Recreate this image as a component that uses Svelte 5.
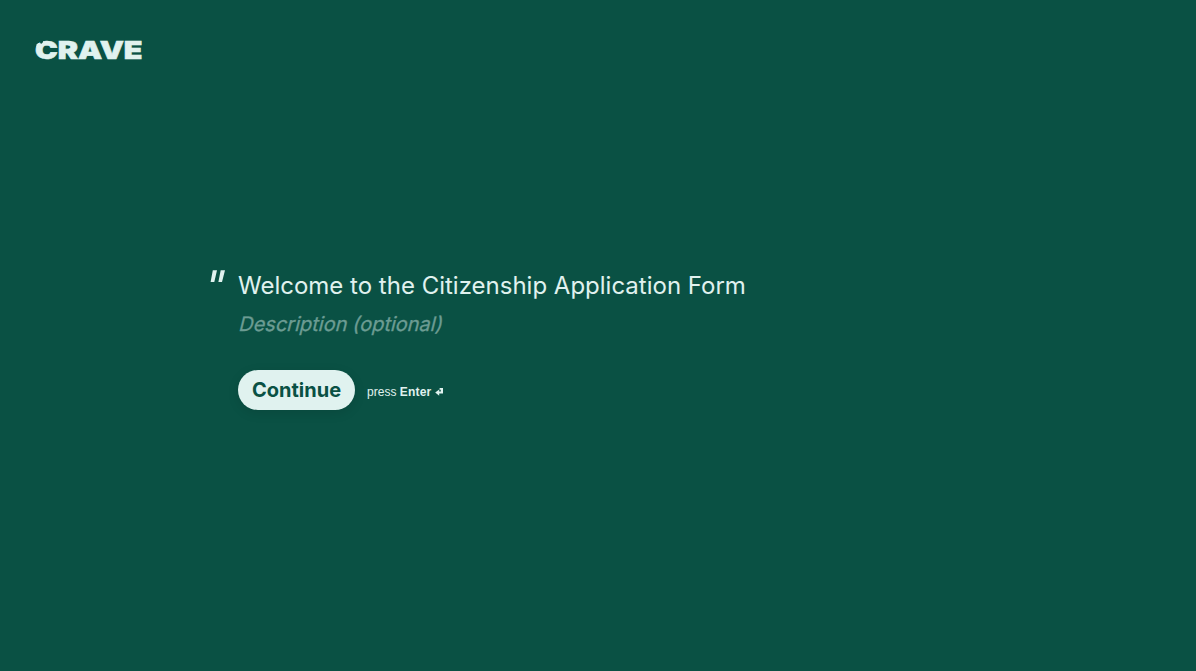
<script lang="ts">
	/**
	 * Welcome screen of the form: brand header, statement block and continue action.
	 */
	let {
		title = 'Welcome to the Citizenship Application Form',
		description = 'Description (optional)',
		buttonLabel = 'Continue'
	}: {
		title?: string;
		description?: string;
		buttonLabel?: string;
	} = $props();
</script>

<div class="page">
	<header class="header">
		<svg class="logo" width="110" height="28" viewBox="0 0 110 28" role="img" aria-label="Crave">
			<text x="0" y="21" textLength="107.5" lengthAdjust="spacingAndGlyphs">CRAVE</text>
			<path class="nub" d="M1.2 9.5L1.6 6.4L3.2 5L5.8 5.4L6 8Z" />
			<path class="bite" d="M4.6 1.5H8.4L7.9 4.2L6.6 5.8L5.2 5.2Z" />
		</svg>
	</header>

	<main class="statement">
		<div class="marker">
			<svg width="15" height="13" viewBox="0 0 15 13" aria-hidden="true">
				<path d="M2.8 0.3H7L4.3 12H0.6ZM10.7 0.3H15L12 12H8.4Z" />
			</svg>
		</div>
		<div class="content">
			<h1 class="title">{title}</h1>
			<p class="description">{description}</p>
			<div class="actions">
				<button class="continue" type="button">{buttonLabel}</button>
				<span class="hint">
					press <strong>Enter</strong>
					<svg class="enter" width="8" height="8" viewBox="0 0 8 8" aria-hidden="true">
						<path d="M4.6 0H8V5.5H4.2V7.8L0.2 4.5L4.2 1.5V3.5H5.8V1.7H4.6Z" />
					</svg>
				</span>
			</div>
		</div>
	</main>
</div>

<style>
	:global(body) {
		background: #0a5144;
	}

	.page {
		display: flex;
		flex-direction: column;
		height: 100vh;
		overflow: hidden;
		background: #0a5144;
		color: #e0f2ef;
		font-family: Inter, sans-serif;
	}

	.header {
		height: 230px;
		padding: 38px 35px 0;
	}

	.logo {
		display: block;
		overflow: visible;
	}

	.logo text {
		font-size: 25px;
		font-weight: 900;
		line-height: 1;
		fill: #e0f2ef;
		stroke: #e0f2ef;
		stroke-width: 0.6px;
	}

	.logo .nub {
		fill: #e0f2ef;
	}

	.logo .bite {
		fill: #0a5144;
	}

	.statement {
		display: flex;
		width: 720px;
		margin-left: 210px;
	}

	.marker {
		flex: 0 0 28px;
		padding-top: 2px;
	}

	.marker svg {
		display: block;
		fill: #e0f2ef;
	}

	.title {
		margin: 0;
		padding-top: 1px;
		font-size: 24px;
		font-weight: 400;
		line-height: 34px;
	}

	/* slanted upright letters, not the true italic */
	.description {
		margin: 7px 0 0;
		color: #6c9c93;
		font-size: 20px;
		line-height: 28px;
		transform: skewX(-14deg);
		transform-origin: 0 21px;
		-webkit-text-stroke: 0.3px #6c9c93;
	}

	.actions {
		display: flex;
		align-items: center;
		gap: 12px;
		margin-top: 32px;
	}

	.continue {
		height: 40px;
		padding: 0 14px;
		border: 0;
		border-radius: 20px;
		background: #e0f2ef;
		box-shadow: 0 3px 12px rgba(0, 0, 0, 0.1);
		color: #0a5144;
		font: 700 20px/40px Inter, sans-serif;
		cursor: pointer;
	}

	.hint {
		padding-top: 3px;
		font-family: 'Liberation Sans', Arial, sans-serif;
		font-size: 12px;
		line-height: 16px;
	}

	.hint strong {
		letter-spacing: 0.2px;
	}

	.enter {
		fill: currentColor;
	}
</style>
